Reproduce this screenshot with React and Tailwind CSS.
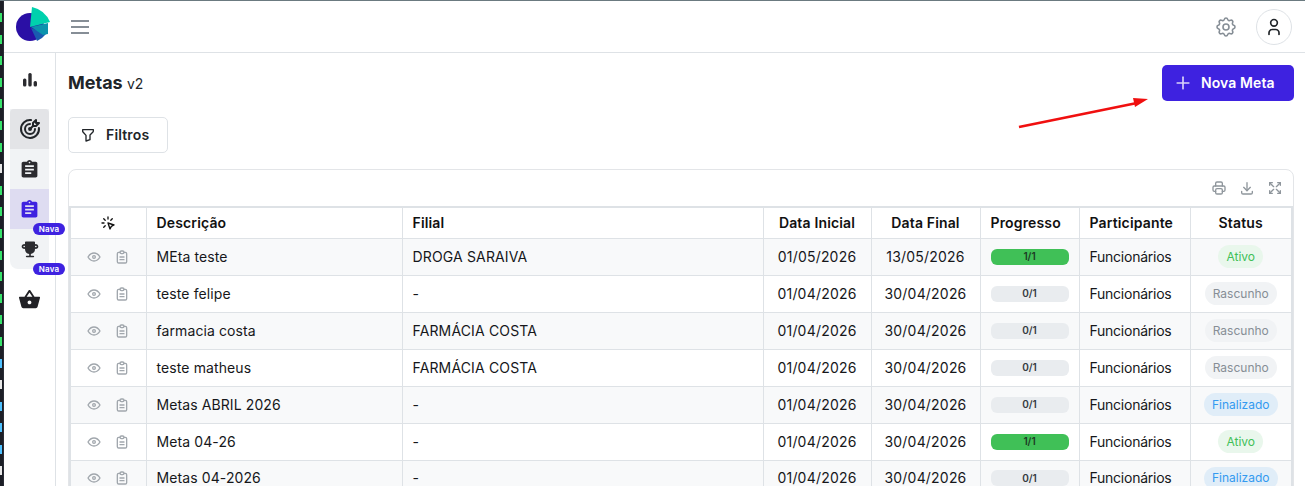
import React from "react";
import { TbEye, TbClipboardText, TbPrinter, TbDownload, TbArrowsMaximize, TbSettings, TbUser, TbClick, TbFilter, TbPlus, TbTargetArrow, TbTrophyFilled } from "react-icons/tb";
import { MdAssignment, MdShoppingBasket } from "react-icons/md";

const rows = [
    { id: 1, name: "MEta teste", filial: "DROGA SARAIVA", start: "01/05/2026", end: "13/05/2026", done: true, status: "Ativo" },
    { id: 2, name: "teste felipe", filial: "-", start: "01/04/2026", end: "30/04/2026", done: false, status: "Rascunho" },
    { id: 3, name: "farmacia costa", filial: "FARMÁCIA COSTA", start: "01/04/2026", end: "30/04/2026", done: false, status: "Rascunho" },
    { id: 4, name: "teste matheus", filial: "FARMÁCIA COSTA", start: "01/04/2026", end: "30/04/2026", done: false, status: "Rascunho" },
    { id: 5, name: "Metas ABRIL 2026", filial: "-", start: "01/04/2026", end: "30/04/2026", done: false, status: "Finalizado" },
    { id: 6, name: "Meta 04-26", filial: "-", start: "01/04/2026", end: "30/04/2026", done: true, status: "Ativo" },
    { id: 7, name: "Metas 04-2026", filial: "-", start: "01/04/2026", end: "30/04/2026", done: false, status: "Finalizado" },
];

const statusStyles = {
    Ativo: "bg-[#e9f7ec] text-[#40c057]",
    Rascunho: "bg-[#f1f3f5] text-[#868e96]",
    Finalizado: "bg-[#e0edf8] text-[#339af0]",
};

// bits of the terminal window peeking out behind the browser
const strip = [
    "bg-[#37e36b]", "bg-[#37e36b]", "bg-[#37e36b]", "bg-[#37e36b]", "bg-[#37e36b]", "bg-[#37e36b]", "bg-[#37e36b]",
    "bg-[#e8e8e8]", "bg-[#37e36b]", "bg-[#37e36b]", "bg-[#37e36b]", "bg-[#37e36b]", "bg-[#37e36b]", "bg-[#37e36b]",
    "bg-[#37e36b]", "bg-[#37e36b]", "bg-[#4fc1ff]", "bg-[#e8e8e8]", "bg-[#4fc1ff]", "bg-[#4fc1ff]", "bg-[#4fc1ff]", "bg-[#e8e8e8]",
];

const Logo = () => (
    <svg viewBox="0 0 36 36" className="mb-[5px] h-9 w-9 flex-none">
        <circle cx="14" cy="21" r="14" fill="#2a0fa5" />
        <path d="M15 22 L30 28 L26 32 L21 35 Z" fill="#1a5bb0" />
        <path d="M15 21 L32 17 L32 28 L27 29 Z" fill="#0b93ad" />
        <path d="M16 1 Q29 4 34 16 L14 21 Z" fill="#00d1ad" />
    </svg>
);

const Bars = () => (
    <svg viewBox="0 0 16 16" className="h-4 w-4" fill="#2b2b2f">
        <rect x="1" y="6.5" width="3.4" height="8" rx="1.5" />
        <rect x="6.3" y="1" width="3.4" height="13.5" rx="1.5" />
        <rect x="11.6" y="9" width="3.4" height="5.5" rx="1.5" />
    </svg>
);

const NavaBadge = () => (
    <span className="absolute left-[23px] top-[34px] z-10 flex h-3 w-[32px] items-center justify-center rounded-full bg-[#3e22e0] text-[8px] font-semibold tracking-wide text-white">Nava</span>
);

const Th = ({ children, className = "text-center" }) => (
    <th className={"border border-[#dee2e6] px-[10px] text-sm font-semibold tracking-[0.15px] text-[#111] " + className}>{children}</th>
);

const Td = ({ children, className = "" }) => (
    <td className={"border border-[#dee2e6] px-[10px] text-sm text-[#16171a] " + className}>{children}</td>
);

const App = () => {
    return (
        <div className="relative flex h-[486px] w-[1305px] overflow-hidden border-t border-[#6b7a80] bg-white font-['Inter',sans-serif]">
            <div className="flex w-[4px] flex-none flex-col overflow-hidden border-r border-[#2a2c35] bg-[#1c1e26] pt-[12px]">
                {strip.map((color, i) => (
                    <div key={i} className="h-[21.6px] flex-none">
                        <div className={"h-[9px] w-[2px] " + color}></div>
                    </div>
                ))}
            </div>
            <div className="flex min-w-0 flex-auto flex-col">
                <header className="flex h-[52px] flex-none items-center border-b border-[#dee2e6] pl-[12px] pr-[13px]">
                    <Logo />
                    <button className="ml-[19px] flex-none text-[#868e96]">
                        <svg viewBox="0 0 18 14" className="h-[14px] w-[18px]" stroke="currentColor" strokeWidth="2" fill="none"><path d="M0 1h18M0 7h18M0 13h18" /></svg>
                    </button>
                    <div className="ml-auto flex items-center gap-[18px]">
                        <TbSettings className="h-6 w-6 text-[#868e96]" strokeWidth={1.6} />
                        <div className="flex h-9 w-9 items-center justify-center rounded-full border border-[#dee2e6]">
                            <TbUser className="h-[20px] w-[20px] text-[#212529]" />
                        </div>
                    </div>
                </header>
                <div className="flex min-h-0 flex-auto">
                    <aside className="flex w-[52px] flex-none flex-col items-start border-r border-[#dee2e6] pl-[6px]">
                        <div className="flex h-[56px] w-[39px] items-center justify-center pb-[3px]"><Bars /></div>
                        <div className="w-[39px] overflow-visible rounded-b-lg bg-[#f1f3f5]">
                            <div className="flex h-10 items-center justify-center rounded-t-sm bg-[#e3e4e7]"><TbTargetArrow className="h-6 w-6 text-[#212529]" strokeWidth={2} /></div>
                            <div className="flex h-10 items-center justify-center"><MdAssignment className="h-[21px] w-[21px] text-[#2b2b2f]" /></div>
                            <div className="relative flex h-10 items-center justify-center bg-[#dedcf1]">
                                <MdAssignment className="h-[21px] w-[21px] text-[#3e22e0]" />
                                <NavaBadge />
                            </div>
                            <div className="relative flex h-10 items-center justify-center">
                                <TbTrophyFilled className="h-[20px] w-[20px] text-[#2b2b2f]" />
                                <NavaBadge />
                            </div>
                        </div>
                        <div className="flex h-[60px] w-[39px] items-center justify-center"><MdShoppingBasket className="h-[23px] w-[23px] text-[#212125]" /></div>
                    </aside>
                    <main className="min-w-0 flex-auto pl-[12px] pr-[11px] pt-[12px]">
                        <div className="flex h-9 items-center justify-between">
                            <h1 className="text-lg font-bold text-[#212529]">Metas <span className="text-sm font-normal">v2</span></h1>
                            <button className="flex h-9 w-[132px] items-center rounded-[5px] bg-[#3e22e0] pl-[11px] text-sm font-semibold text-white">
                                <TbPlus className="h-5 w-5 opacity-80" />
                                <span className="ml-[8px] tracking-[0.1px]">Nova Meta</span>
                            </button>
                        </div>
                        <button className="mt-[16px] flex h-9 w-[100px] items-center rounded-[5px] border border-[#dee2e6] pl-[11px] text-sm font-semibold text-[#212529]">
                            <TbFilter className="h-4 w-4" />
                            <span className="ml-[10px] tracking-[0.15px]">Filtros</span>
                        </button>
                        <div className="mt-[16px] rounded-t-lg border border-[#e3e5e8]">
                            <div className="flex h-9 items-center justify-end gap-[12px] pr-[10px] text-[#8f969c]">
                                <TbPrinter className="h-4 w-4" />
                                <TbDownload className="h-4 w-4" />
                                <TbArrowsMaximize className="h-4 w-4" />
                            </div>
                            <table className="w-full table-fixed border-collapse border-2 border-[#dee2e6]">
                                <colgroup>
                                    <col className="w-[76px]" />
                                    <col className="w-[256px]" />
                                    <col className="w-[361px]" />
                                    <col className="w-[108px]" />
                                    <col className="w-[109px]" />
                                    <col className="w-[99px]" />
                                    <col className="w-[111px]" />
                                    <col />
                                </colgroup>
                                <thead>
                                    <tr className="h-[31px]">
                                        <Th><TbClick className="mx-auto h-4 w-4" /></Th>
                                        <Th className="text-left">Descrição</Th>
                                        <Th className="text-left">Filial</Th>
                                        <Th>Data Inicial</Th>
                                        <Th>Data Final</Th>
                                        <Th className="text-left">Progresso</Th>
                                        <Th className="text-left">Participante</Th>
                                        <Th>Status</Th>
                                    </tr>
                                </thead>
                                <tbody>
                                    {rows.map((row, index) => (
                                        <tr key={row.id} className={"h-[37px] " + (index % 2 === 0 ? "bg-[#f8f9fa]" : "bg-white")}>
                                            <Td>
                                                <div className="flex items-center justify-center gap-[12px] text-[#a1a7ad]">
                                                    <TbEye className="h-4 w-4" />
                                                    <TbClipboardText className="h-4 w-4" />
                                                </div>
                                            </Td>
                                            <Td className="tracking-[0.1px]">{row.name}</Td>
                                            <Td className="tracking-[0.15px]">{row.filial}</Td>
                                            <Td className="text-center tracking-[0.2px]">{row.start}</Td>
                                            <Td className="text-center tracking-[0.2px]">{row.end}</Td>
                                            <Td>
                                                <div className={"flex h-4 items-center justify-center rounded-md text-[10px] font-semibold " + (row.done ? "bg-[#40c057] text-[#1d3a24]" : "bg-[#e9ecef] text-[#343a40]")}>
                                                    {row.done ? "1/1" : "0/1"}
                                                </div>
                                            </Td>
                                            <Td className="tracking-[-0.25px]">Funcionários</Td>
                                            <Td className="text-center">
                                                <span className={"inline-flex h-[23px] items-center rounded-full px-[8px] text-xs " + statusStyles[row.status]}>{row.status}</span>
                                            </Td>
                                        </tr>
                                    ))}
                                </tbody>
                            </table>
                        </div>
                    </main>
                </div>
            </div>
            <svg className="pointer-events-none absolute left-[1015px] top-[93px] h-[36px] w-[136px]" viewBox="0 0 136 36">
                <path d="M4 33 L122 9" stroke="#f00f0f" strokeWidth="2.8" />
                <path d="M118 4 L133 5 L120 13 Z" fill="#f00f0f" />
            </svg>
        </div>
    );
};

export default App;
